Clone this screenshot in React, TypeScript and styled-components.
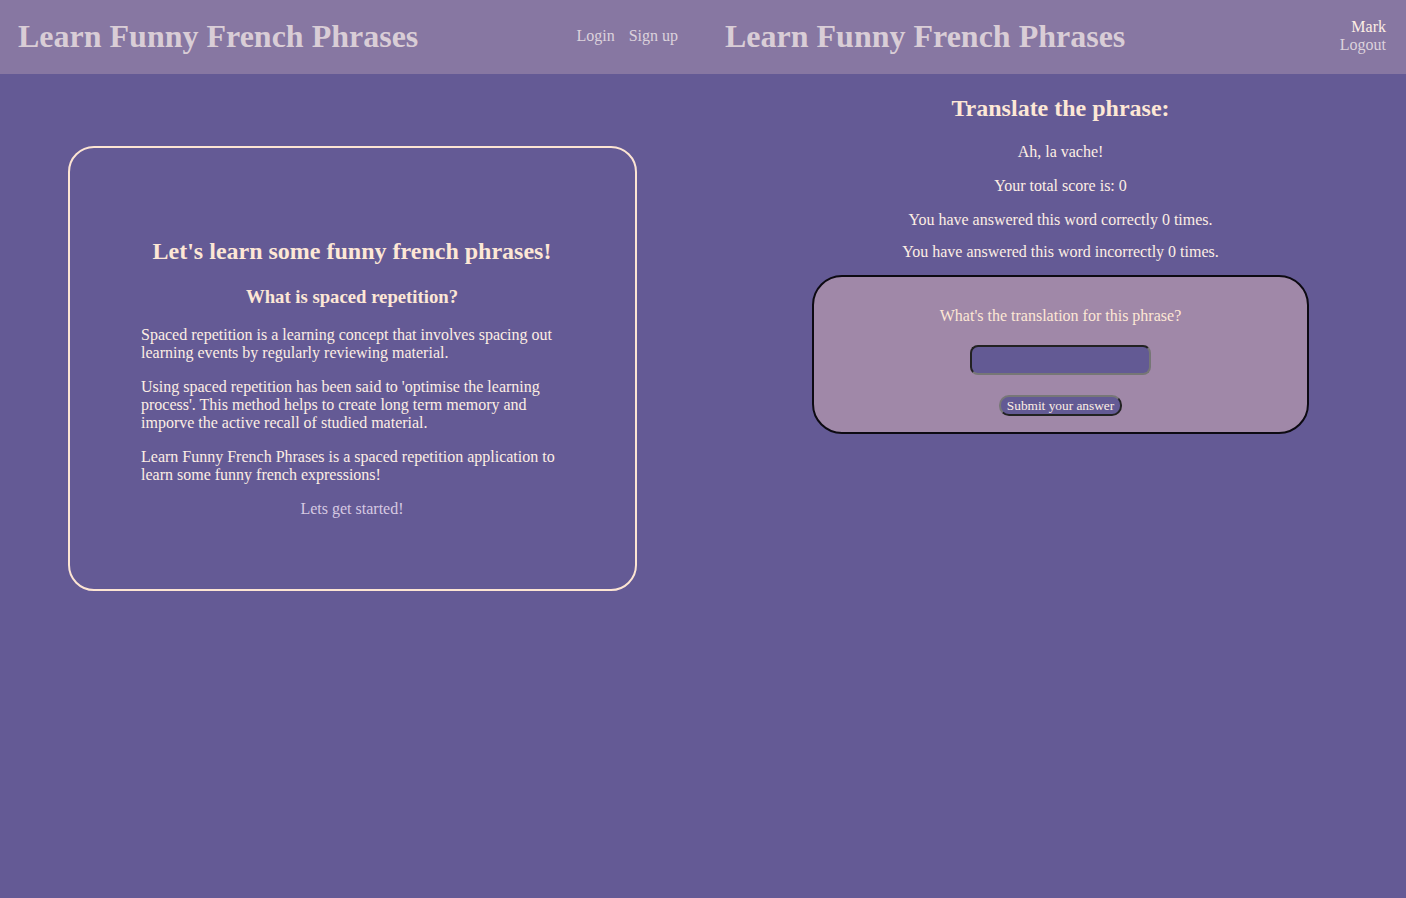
import React from "react";
import styled, { createGlobalStyle } from "styled-components";

const GlobalStyle = createGlobalStyle`
  html, body {
    margin: 0;
    padding: 0;
    background: #645a95;
  }
  body {
    font-family: "Liberation Serif", "Times New Roman", serif;
    font-size: 16px;
    color: #fdeee4;
  }
`;

const Page = styled.div`
  display: grid;
  grid-template-columns: 1fr 1fr;
  min-height: 100vh;
  background: #645a95;
`;

const Half = styled.div`
  display: flex;
  flex-direction: column;
`;

const Header = styled.header<{ $left: number; $right: number }>`
  height: 74px;
  box-sizing: border-box;
  display: flex;
  align-items: center;
  justify-content: space-between;
  padding: 0 ${(p) => p.$right}px 2px ${(p) => p.$left}px;
  background: #8777a2;
`;

const Title = styled.h1`
  margin: 0;
  font-size: 32px;
  font-weight: bold;
  color: #d9cdd6;
  white-space: nowrap;
`;

const Nav = styled.nav`
  display: flex;
  gap: 14px;
`;

const UserBox = styled.div`
  display: flex;
  flex-direction: column;
  align-items: flex-end;
  line-height: 18px;
`;

const NavLink = styled.a<{ $bright?: boolean }>`
  color: ${(p) => (p.$bright ? "#fdeee4" : "#dcd2dc")};
  text-decoration: none;
  cursor: pointer;
`;

const LandingMain = styled.main`
  display: flex;
  justify-content: center;
  padding: 72px 0 0 2px;
`;

const InfoCard = styled.section`
  width: 569px;
  box-sizing: border-box;
  height: 445px;
  border: 2px solid #fde5d3;
  border-radius: 26px;
  padding: 70px 72px 0 71px;
  text-align: center;
`;

const CardHeading = styled.h2`
  font-size: 24px;
  margin: 20px 0;
  color: #fde7d5;
`;

const SubHeading = styled.h3`
  font-size: 18.72px;
  margin: 21px 0 18px;
  color: #fde7d5;
`;

const Para = styled.p`
  text-align: left;
  margin: 16px 0;
  line-height: 18px;
`;

const StartLink = styled.a`
  display: block;
  margin: 16px 0;
  line-height: 18px;
  color: #d6c9e2;
  text-decoration: none;
`;

const QuizMain = styled.main`
  display: flex;
  flex-direction: column;
  align-items: center;
  padding-left: 12px;
`;

const QuizHeading = styled.h2`
  font-size: 24px;
  margin: 21px 0 21px;
  color: #fde7d5;
`;

const Stat = styled.p<{ $gap?: number }>`
  margin: ${(p) => p.$gap ?? 16}px 0 0;
  line-height: 18px;
`;

const AnswerForm = styled.form`
  margin-top: 14px;
  width: 497px;
  box-sizing: border-box;
  display: flex;
  flex-direction: column;
  align-items: center;
  padding: 14px 0 16px;
  background: #a088a8;
  border: 2px solid #0d0a12;
  border-radius: 30px;
`;

const Label = styled.label`
  display: block;
  margin: 16px 0 20px;
  line-height: 18px;
  font-size: 16px;
  color: #fde7d5;
`;

const AnswerInput = styled.input`
  width: 181px;
  height: 30px;
  box-sizing: border-box;
  background: #635a94;
  border: 2px solid #767676;
  border-top-color: #222;
  border-left-color: #222;
  border-radius: 8px;
  color: #fdeee4;
  font-family: inherit;
`;

const SubmitButton = styled.button`
  margin-top: 20px;
  height: 21px;
  padding: 0 6px;
  background: #635a94;
  border: 2px solid #222;
  border-top-color: #777;
  border-left-color: #777;
  border-radius: 10px;
  color: #fdeee4;
  font-family: "Liberation Serif", "Times New Roman", serif;
  font-size: 13.33px;
  line-height: 15px;
  cursor: pointer;
`;

const App: React.FC = () => {
  return (
    <>
      <GlobalStyle />
      <Page>
        <Half>
          <Header $left={18} $right={25}>
            <Title>Learn Funny French Phrases</Title>
            <Nav>
              <NavLink>Login</NavLink>
              <NavLink>Sign up</NavLink>
            </Nav>
          </Header>
          <LandingMain>
            <InfoCard>
              <CardHeading>Let's learn some funny french phrases!</CardHeading>
              <SubHeading>What is spaced repetition?</SubHeading>
              <Para>
                Spaced repetition is a learning concept that involves spacing out
                learning events by regularly reviewing material.
              </Para>
              <Para>
                Using spaced repetition has been said to 'optimise the learning
                process'. This method helps to create long term memory and
                imporve the active recall of studied material.
              </Para>
              <Para>
                Learn Funny French Phrases is a spaced repetition application to
                learn some funny french expressions!
              </Para>
              <StartLink>Lets get started!</StartLink>
            </InfoCard>
          </LandingMain>
        </Half>
        <Half>
          <Header $left={22} $right={20}>
            <Title>Learn Funny French Phrases</Title>
            <UserBox>
              <NavLink $bright>Mark</NavLink>
              <NavLink>Logout</NavLink>
            </UserBox>
          </Header>
          <QuizMain>
            <QuizHeading>Translate the phrase:</QuizHeading>
            <Stat $gap={0}>Ah, la vache!</Stat>
            <Stat>Your total score is: 0</Stat>
            <Stat>You have answered this word correctly 0 times.</Stat>
            <Stat $gap={14}>You have answered this word incorrectly 0 times.</Stat>
            <AnswerForm onSubmit={(e) => e.preventDefault()}>
              <Label htmlFor="answer">What's the translation for this phrase?</Label>
              <AnswerInput id="answer" type="text" />
              <SubmitButton type="submit">Submit your answer</SubmitButton>
            </AnswerForm>
          </QuizMain>
        </Half>
      </Page>
    </>
  );
};

export default App;
